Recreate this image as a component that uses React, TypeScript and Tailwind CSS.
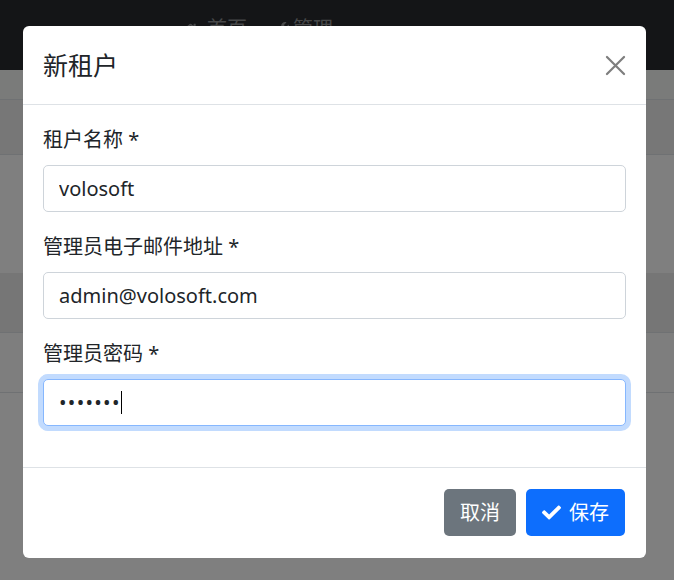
import { FaCheck, FaHome, FaWrench } from "react-icons/fa";

const FONT = "font-['Segoe_UI','Noto_Sans','Noto_Sans_CJK_SC',sans-serif]";

function Field({ label, value }: { label: string; value: string }) {
  return (
    <div className="mb-5">
      <label className="mb-[10px] block text-[20px] leading-[30px] text-[#212529]">{label}</label>
      <input
        readOnly
        defaultValue={value}
        className={`block h-[47px] w-full rounded-[5px] border border-[#ced4da] bg-white px-[15px] text-[20px] text-[#212529] outline-none ${FONT}`}
      />
    </div>
  );
}

export default function App() {
  return (
    <div className={`relative h-[580px] w-[674px] overflow-hidden bg-white ${FONT}`}>
      {/* page behind the backdrop */}
      <div className="flex h-[70px] items-start bg-[#282a2e] pl-[183px] pt-[14px] text-[20px] leading-[30px] text-[#8e9093]">
        <span className="flex items-center gap-[9px]">
          <FaHome className="h-[15px] w-[15px]" />
          首页
        </span>
        <span className="ml-[28px] flex items-center gap-[4px]">
          <FaWrench className="h-[14px] w-[14px]" />
          管理
        </span>
      </div>
      <div className="h-[30px] border-b border-[#dee2e6] bg-[#f5f6f5]" />
      <div className="h-[55px] border-b border-[#dee2e6] bg-[#eeeeee]" />
      <div className="h-[118px] bg-white" />
      <div className="h-[60px] border-b border-[#dee2e6] bg-[#ececec]" />
      <div className="h-[60px] border-b border-[#dee2e6] bg-[#fdfdfd]" />
      <div className="absolute inset-0 bg-black/50" />

      {/* modal */}
      <div className="absolute left-[23px] top-[26px] w-[623px] rounded-[6px] bg-white text-[#212529]">
        <div className="flex items-center justify-between border-b border-[#dee2e6] px-5 py-5">
          <h5 className="text-[25px] leading-[38px]">新租户</h5>
          <button className="flex h-[22px] w-[22px] items-center justify-center opacity-50">
            <svg viewBox="0 0 16 16" className="h-[21px] w-[21px]">
              <path d="M1.5 1.5l13 13M14.5 1.5l-13 13" stroke="#000" strokeWidth="1.7" strokeLinecap="round" />
            </svg>
          </button>
        </div>

        <div className="px-5 pb-[21px] pt-5">
          <Field label="租户名称 *" value="volosoft" />
          <Field label="管理员电子邮件地址 *" value="admin@volosoft.com" />
          <div className="mb-5">
            <label className="mb-[10px] block text-[20px] leading-[30px]">管理员密码 *</label>
            <div className="flex h-[47px] w-full items-center rounded-[5px] border border-[#86b7fe] bg-white px-[15px] shadow-[0_0_0_5px_rgba(13,110,253,0.25)]">
              <span className="text-[20px] tracking-[1.3px] text-[#212529]">•••••••</span>
              <span className="h-[23px] w-px bg-black" />
            </div>
          </div>
        </div>

        <div className="flex justify-end gap-[10px] border-t border-[#dee2e6] pb-[22px] pl-5 pr-[21px] pt-[21px]">
          <button className="h-[47px] rounded-[5px] bg-[#6c757d] px-[16px] text-[20px] text-white">取消</button>
          <button className="flex h-[47px] items-center gap-[8px] rounded-[5px] bg-[#0d6efd] px-[16px] text-[20px] text-white">
            <FaCheck className="h-[19px] w-[19px]" />
            保存
          </button>
        </div>
      </div>
    </div>
  );
}
